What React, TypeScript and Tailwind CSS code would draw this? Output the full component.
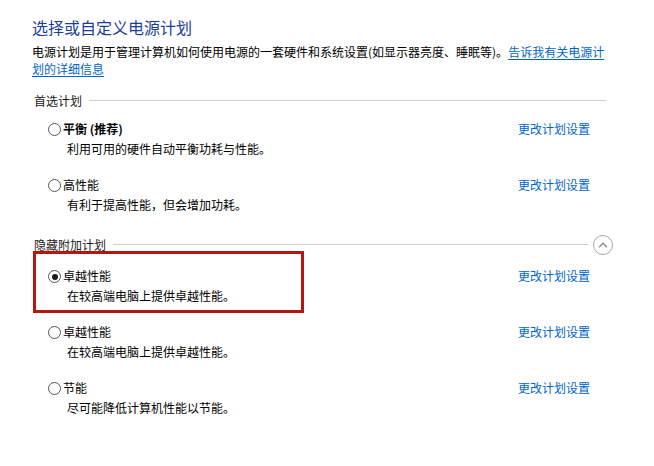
import React from 'react';

const plans = {
  preferred: [
    { name: '平衡 (推荐)', desc: '利用可用的硬件自动平衡功耗与性能。', bold: true },
    { name: '高性能', desc: '有利于提高性能，但会增加功耗。' },
  ],
  hidden: [
    { name: '卓越性能', desc: '在较高端电脑上提供卓越性能。', selected: true, highlight: true },
    { name: '卓越性能', desc: '在较高端电脑上提供卓越性能。' },
    { name: '节能', desc: '尽可能降低计算机性能以节能。' },
  ],
};

type Plan = { name: string; desc: string; bold?: boolean; selected?: boolean; highlight?: boolean };

function Radio({ checked }: { checked?: boolean }) {
  return (
    <span className="mt-[2px] flex h-[13px] w-[13px] shrink-0 items-center justify-center rounded-full border border-[#555555] bg-white">
      {checked && <span className="h-[6px] w-[6px] rounded-full bg-[#1a1a1a]" />}
    </span>
  );
}

function PlanItem({ plan }: { plan: Plan }) {
  return (
    <div className="relative">
      {plan.highlight && (
        <div className="pointer-events-none absolute left-[1px] top-[-16px] h-[62px] w-[271px] border-[3px] border-[#b3170f]" />
      )}
      <div className="flex h-[17px] items-center">
        <div className="ml-[16px] flex items-center gap-[2px]">
          <Radio checked={plan.selected} />
          <span className={plan.bold ? 'font-bold text-black' : 'text-black'}>{plan.name}</span>
        </div>
        <a className="ml-auto mr-[16px] text-[#0066cc] cursor-pointer">更改计划设置</a>
      </div>
      <p className="mt-[3px] pl-[35px] text-black">{plan.desc}</p>
    </div>
  );
}

export default function App() {
  return (
    <div
      className="min-h-[466px] w-[654px] bg-white pl-[32px] pt-[15px] text-[12px] leading-[17px]"
      style={{ fontFamily: '"Noto Sans CJK SC", "Noto Sans", sans-serif' }}
    >
      <h1 className="text-[16px] leading-[24px] font-normal text-[#1a3d9a]">选择或自定义电源计划</h1>
      <p className="mt-[4px] w-[600px] text-black">
        电源计划是用于管理计算机如何使用电源的一套硬件和系统设置(如显示器亮度、睡眠等)。
        <a className="text-[#0066cc] underline underline-offset-[2px] cursor-pointer">
          告诉我有关电源计
          <br />
          划的详细信息
        </a>
      </p>

      <div className="w-[574px]">
        <div className="mt-[15px] flex h-[17px] items-center gap-[7px] pl-[2px]">
          <span className="text-[#1a1a1a]">首选计划</span>
          <div className="h-px flex-1 bg-[#cccccc]" />
        </div>

        <div className="mt-[11px] flex flex-col gap-[19px]">
          {plans.preferred.map((p, i) => (
            <PlanItem key={i} plan={p} />
          ))}
        </div>

        <div className="mr-[-7px] mt-[23px] flex h-[17px] items-center pl-[2px]">
          <span className="text-[#1a1a1a]">隐藏附加计划</span>
          <div className="ml-[7px] h-px flex-1 bg-[#cccccc]" />
          <button className="ml-[5px] flex h-[20px] w-[20px] items-center justify-center rounded-full border border-[#a6a6a6] bg-white">
            <svg width="10" height="6" viewBox="0 0 10 6" fill="none">
              <path d="M1 5.2 L5 1.2 L9 5.2" stroke="#8a8a8a" strokeWidth="1.3" />
            </svg>
          </button>
        </div>

        <div className="mt-[14px] flex flex-col gap-[19px]">
          {plans.hidden.map((p, i) => (
            <PlanItem key={i} plan={p} />
          ))}
        </div>
      </div>
    </div>
  );
}
